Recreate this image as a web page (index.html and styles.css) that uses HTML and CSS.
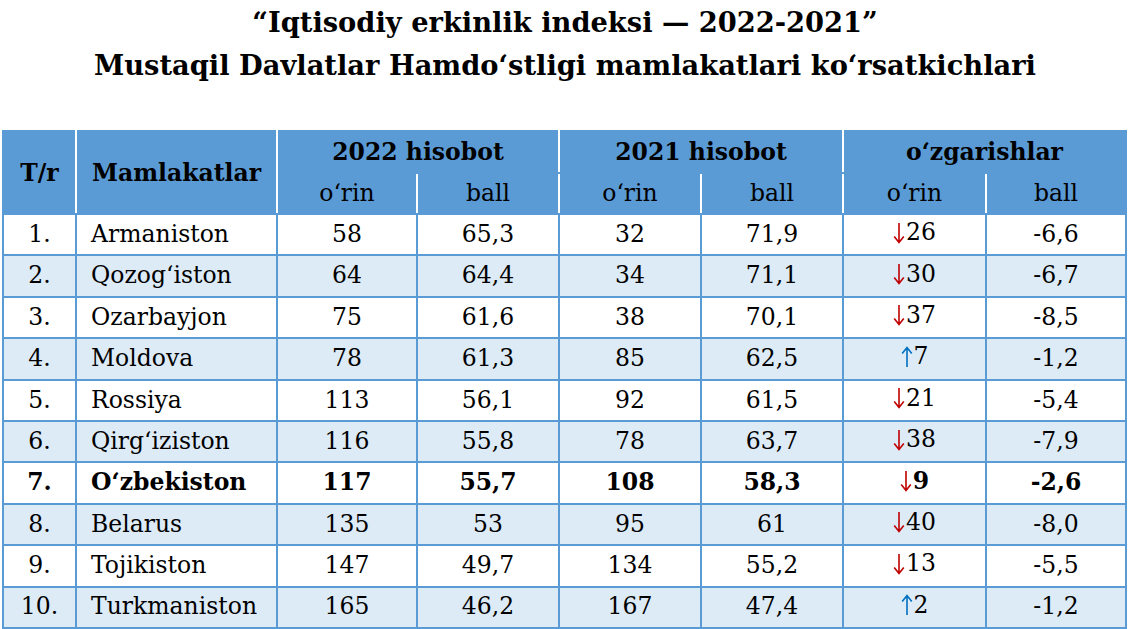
FILE: index.html
```html
<!DOCTYPE html>
<html lang="uz">
<head>
<meta charset="utf-8">
<title>Iqtisodiy erkinlik indeksi</title>
<link rel="stylesheet" href="styles.css">
</head>
<body>
<div class="page">
  <h1 class="title">
    <span class="title-line">“Iqtisodiy erkinlik indeksi — 2022-2021”</span>
    <span class="title-line">Mustaqil Davlatlar Hamdo‘stligi mamlakatlari ko‘rsatkichlari</span>
  </h1>
  <table class="data">
    <colgroup>
      <col class="c-num"><col class="c-name"><col class="c-a"><col class="c-b"><col class="c-b"><col class="c-b"><col class="c-c"><col class="c-a">
    </colgroup>
    <thead>
      <tr class="hrow">
        <th rowspan="2" class="hb">T/r</th>
        <th rowspan="2" class="hb">Mamlakatlar</th>
        <th colspan="2" class="hb">2022 hisobot</th>
        <th colspan="2" class="hb">2021 hisobot</th>
        <th colspan="2" class="hb">o‘zgarishlar</th>
      </tr>
      <tr class="hrow">
        <th>o‘rin</th><th>ball</th>
        <th>o‘rin</th><th>ball</th>
        <th>o‘rin</th><th>ball</th>
      </tr>
    </thead>
    <tbody>
      <tr><td>1.</td><td class="name">Armaniston</td><td>58</td><td>65,3</td><td>32</td><td>71,9</td><td><span class="chg"><svg class="arr down" viewBox="0 0 12 22"><path d="M6 1V20M1.2 14.5L6 20.5L10.8 14.5"/></svg>26</span></td><td>-6,6</td></tr>
      <tr class="alt"><td>2.</td><td class="name">Qozog‘iston</td><td>64</td><td>64,4</td><td>34</td><td>71,1</td><td><span class="chg"><svg class="arr down" viewBox="0 0 12 22"><path d="M6 1V20M1.2 14.5L6 20.5L10.8 14.5"/></svg>30</span></td><td>-6,7</td></tr>
      <tr><td>3.</td><td class="name">Ozarbayjon</td><td>75</td><td>61,6</td><td>38</td><td>70,1</td><td><span class="chg"><svg class="arr down" viewBox="0 0 12 22"><path d="M6 1V20M1.2 14.5L6 20.5L10.8 14.5"/></svg>37</span></td><td>-8,5</td></tr>
      <tr class="alt"><td>4.</td><td class="name">Moldova</td><td>78</td><td>61,3</td><td>85</td><td>62,5</td><td><span class="chg"><svg class="arr up" viewBox="0 0 12 22"><path d="M6 21V2M1.2 7.5L6 1.5L10.8 7.5"/></svg>7</span></td><td>-1,2</td></tr>
      <tr><td>5.</td><td class="name">Rossiya</td><td>113</td><td>56,1</td><td>92</td><td>61,5</td><td><span class="chg"><svg class="arr down" viewBox="0 0 12 22"><path d="M6 1V20M1.2 14.5L6 20.5L10.8 14.5"/></svg>21</span></td><td>-5,4</td></tr>
      <tr class="alt"><td>6.</td><td class="name">Qirg‘iziston</td><td>116</td><td>55,8</td><td>78</td><td>63,7</td><td><span class="chg"><svg class="arr down" viewBox="0 0 12 22"><path d="M6 1V20M1.2 14.5L6 20.5L10.8 14.5"/></svg>38</span></td><td>-7,9</td></tr>
      <tr class="bold"><td>7.</td><td class="name">O‘zbekiston</td><td>117</td><td>55,7</td><td>108</td><td>58,3</td><td><span class="chg"><svg class="arr down" viewBox="0 0 12 22"><path d="M6 1V20M1.2 14.5L6 20.5L10.8 14.5"/></svg>9</span></td><td>-2,6</td></tr>
      <tr class="alt"><td>8.</td><td class="name">Belarus</td><td>135</td><td>53</td><td>95</td><td>61</td><td><span class="chg"><svg class="arr down" viewBox="0 0 12 22"><path d="M6 1V20M1.2 14.5L6 20.5L10.8 14.5"/></svg>40</span></td><td>-8,0</td></tr>
      <tr><td>9.</td><td class="name">Tojikiston</td><td>147</td><td>49,7</td><td>134</td><td>55,2</td><td><span class="chg"><svg class="arr down" viewBox="0 0 12 22"><path d="M6 1V20M1.2 14.5L6 20.5L10.8 14.5"/></svg>13</span></td><td>-5,5</td></tr>
      <tr class="alt"><td>10.</td><td class="name">Turkmaniston</td><td>165</td><td>46,2</td><td>167</td><td>47,4</td><td><span class="chg"><svg class="arr up" viewBox="0 0 12 22"><path d="M6 21V2M1.2 7.5L6 1.5L10.8 7.5"/></svg>2</span></td><td>-1,2</td></tr>
    </tbody>
  </table>
</div>
</body>
</html>
```

FILE: styles.css
```css
html, body {
  margin: 0;
  padding: 0;
  background: #ffffff;
}

.page {
  padding: 0 2px;
  font-family: "DejaVu Serif", "Liberation Serif", serif;
  color: #000;
}

.title {
  margin: 0;
  font-size: 27.3px;
  font-weight: bold;
  line-height: 43px;
  text-align: center;
}

.title-line {
  display: block;
}

.title-line:first-child {
  margin-top: 1px;
}

.data {
  margin-top: 43px;
  width: 1125px;
  border-collapse: collapse;
  table-layout: fixed;
  font-size: 23.5px;
}

.c-num { width: 73px; }
.c-name { width: 201px; }
.c-a { width: 140px; }
.c-b { width: 142px; }
.c-c { width: 143px; }

.data th,
.data td {
  padding: 0 4px;
  text-align: center;
  vertical-align: middle;
  white-space: nowrap;
  overflow: hidden;
}

.data thead th {
  background: #5b9bd5;
  font-weight: normal;
  border: 2px solid #5b9bd5;
  border-left-color: #ffffff;
  border-right-color: #ffffff;
}

.data thead th:first-child {
  border-left-color: #5b9bd5;
}

.data thead tr:first-child th:last-child,
.data thead tr:last-child th:last-child {
  border-right-color: #5b9bd5;
}

.data thead th.hb {
  font-weight: bold;
}

.hrow {
  height: 41.5px;
}

.data tbody tr {
  height: 41.4px;
  background: #ffffff;
}

.data tbody tr.alt {
  background: #ddebf7;
}

.data tbody td {
  border: 2px solid #5b9bd5;
  line-height: 1;
}

.data tbody td.name {
  text-align: left;
  padding-left: 14px;
}

.data tbody tr.bold td {
  font-weight: bold;
}

.chg {
  display: inline-flex;
  align-items: flex-end;
}

.arr {
  width: 12px;
  height: 22px;
  margin-right: 1px;
  margin-bottom: 1px;
  fill: none;
  stroke-width: 1.6;
  stroke-linecap: butt;
}

.arr.down {
  stroke: #c00000;
}

.arr.up {
  stroke: #0070c0;
}
```
